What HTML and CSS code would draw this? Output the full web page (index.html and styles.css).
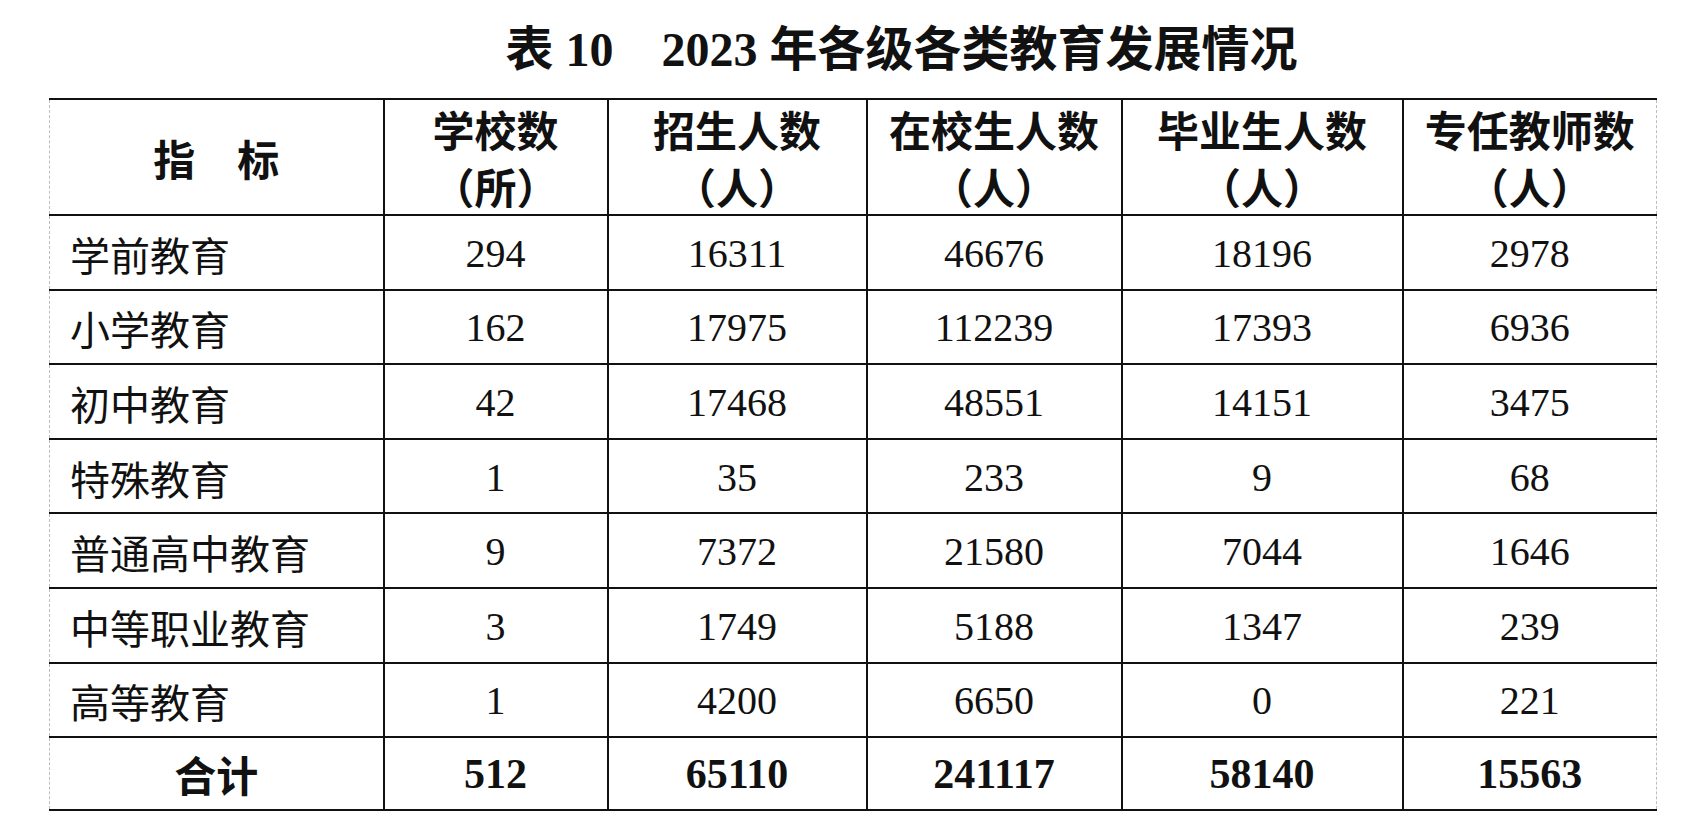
FILE: index.html
```html
<!DOCTYPE html>
<html lang="zh-CN">
<head>
<meta charset="utf-8">
<title>表10 2023年各级各类教育发展情况</title>
<link rel="stylesheet" href="styles.css">
</head>
<body>
<div class="page">
  <h1 class="title">表 10　2023 年各级各类教育发展情况</h1>
  <table class="stats">
    <colgroup>
      <col class="c1"><col class="c2"><col class="c3"><col class="c4"><col class="c5"><col class="c6">
    </colgroup>
    <thead>
      <tr>
        <th>指　标</th>
        <th>学校数<br>（所）</th>
        <th>招生人数<br>（人）</th>
        <th>在校生人数<br>（人）</th>
        <th>毕业生人数<br>（人）</th>
        <th>专任教师数<br>（人）</th>
      </tr>
    </thead>
    <tbody>
      <tr><td class="label">学前教育</td><td>294</td><td>16311</td><td>46676</td><td>18196</td><td>2978</td></tr>
      <tr><td class="label">小学教育</td><td>162</td><td>17975</td><td>112239</td><td>17393</td><td>6936</td></tr>
      <tr><td class="label">初中教育</td><td>42</td><td>17468</td><td>48551</td><td>14151</td><td>3475</td></tr>
      <tr><td class="label">特殊教育</td><td>1</td><td>35</td><td>233</td><td>9</td><td>68</td></tr>
      <tr><td class="label">普通高中教育</td><td>9</td><td>7372</td><td>21580</td><td>7044</td><td>1646</td></tr>
      <tr><td class="label">中等职业教育</td><td>3</td><td>1749</td><td>5188</td><td>1347</td><td>239</td></tr>
      <tr><td class="label">高等教育</td><td>1</td><td>4200</td><td>6650</td><td>0</td><td>221</td></tr>
      <tr class="total"><td class="label">合计</td><td>512</td><td>65110</td><td>241117</td><td>58140</td><td>15563</td></tr>
    </tbody>
  </table>
</div>
</body>
</html>
```

FILE: styles.css
```css
html, body {
  margin: 0;
  padding: 0;
  background: #ffffff;
}

.page {
  width: 1607px;
  margin-left: 49px;
  color: #111111;
}

.title {
  margin: 0;
  height: 98px;
  line-height: 100px;
  padding-left: 98px;
  text-align: center;
  font-family: "Liberation Serif", "Noto Sans CJK SC", serif;
  font-size: 48px;
  font-weight: 700;
  white-space: nowrap;
}

.stats {
  width: 1607px;
  table-layout: fixed;
  border-collapse: collapse;
  border-left: 1px dashed #bdbdbd;
  border-right: 1px dashed #bdbdbd;
  font-family: "Liberation Serif", "Noto Sans CJK SC", serif;
}

.c1 { width: 334px; }
.c2 { width: 224px; }
.c3 { width: 259px; }
.c4 { width: 255px; }
.c5 { width: 281px; }
.c6 { width: 254px; }

.stats th,
.stats td {
  border-top: 2px solid #111111;
  border-bottom: 2px solid #111111;
  border-left: 2px solid #111111;
  padding: 0;
  text-align: center;
  vertical-align: middle;
}

.stats th:first-child,
.stats td:first-child {
  border-left: 1px dashed #bdbdbd;
}

.stats th:last-child,
.stats td:last-child {
  border-right: 1px dashed #bdbdbd;
}

.stats th {
  height: 114px;
  font-family: "Noto Sans CJK SC", sans-serif;
  font-size: 42px;
  font-weight: 700;
  line-height: 57px;
}

.stats td {
  height: 69.6px;
  font-size: 40px;
  font-weight: 400;
  line-height: 48px;
  padding-top: 3px;
}

.stats td.label {
  text-align: left;
  padding-left: 20px;
  font-family: "Noto Sans CJK SC", sans-serif;
  font-size: 40px;
  font-weight: 400;
}

.stats .total td {
  height: 71px;
  font-size: 42px;
  font-weight: 700;
  padding-top: 0;
}

.stats .total td.label {
  text-align: center;
  padding-left: 0;
  font-weight: 700;
}
```
